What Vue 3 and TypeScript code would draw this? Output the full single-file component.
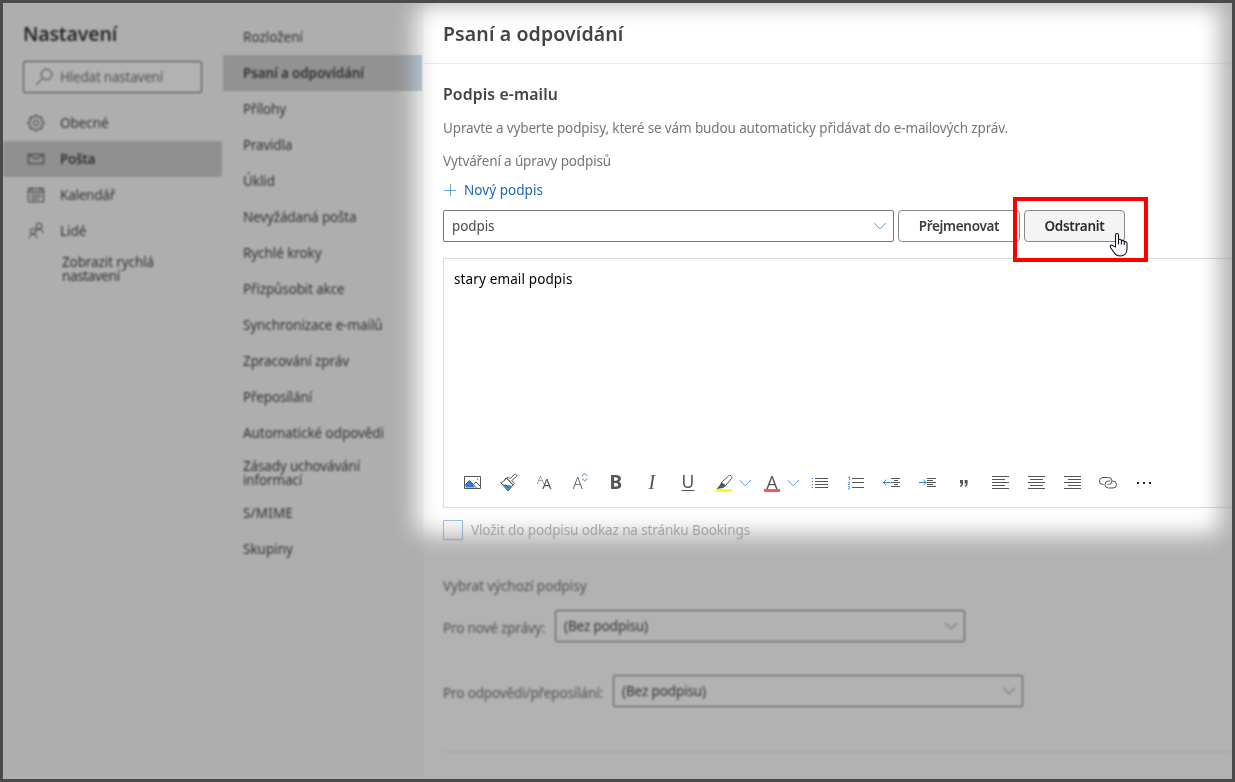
<script setup lang="ts">
import { nextTick } from 'vue'

interface Label { text: string; width: number }
interface MenuItem { lines: Label[]; active?: boolean }

// Tracks a label out (or in) so that it takes the given width.
const fit = (el: HTMLElement, width: number) => {
  const apply = () => {
    el.style.letterSpacing = '0px'
    const count = (el.textContent ?? '').trim().length
    el.style.letterSpacing = `${(width - el.getBoundingClientRect().width) / count}px`
  }
  nextTick(apply)
}
const vFit = { mounted: (el: HTMLElement, b: { value: number }) => fit(el, b.value) }

const sections = [
  { icon: 'gear', text: 'Obecné', width: 48.5 },
  { icon: 'mail', text: 'Pošta', width: 35, active: true },
  { icon: 'calendar', text: 'Kalendář', width: 55 },
  { icon: 'people', text: 'Lidé', width: 26.5 },
]

const one = (text: string, width: number, active = false): MenuItem => ({ lines: [{ text, width }], active })
const topics: MenuItem[] = [
  one('Rozložení', 60),
  one('Psaní a odpovídání', 121, true),
  one('Přílohy', 43),
  one('Pravidla', 49),
  one('Úklid', 32),
  one('Nevyžádaná pošta', 113.5),
  one('Rychlé kroky', 78.5),
  one('Přizpůsobit akce', 101.5),
  one('Synchronizace e-mailů', 139.5),
  one('Zpracování zpráv', 106),
  one('Přeposílání', 69),
  one('Automatické odpovědi', 141),
  { lines: [{ text: 'Zásady uchovávání', width: 117 }, { text: 'informací', width: 59 }] },
  one('S/MIME', 50),
  one('Skupiny', 50),
]

const gearTeeth = Array.from({ length: 8 }, (_, i) => i * 45)
const alignments = [
  { name: 'left', d: 'M10 6.5h17M10 9.5h13M10 12.5h17M10 15.5h13M10 18.5h17' },
  { name: 'center', d: 'M10 6.5h17M12 9.5h13M10 12.5h17M12 15.5h13M10 18.5h17' },
  { name: 'right', d: 'M10 6.5h17M14 9.5h13M10 12.5h17M14 15.5h13M10 18.5h17' },
]
</script>

<template>
  <div class="window">
    <nav class="sections">
      <h1><span v-fit="94">Nastavení</span></h1>
      <div class="search">
        <svg width="18" height="18" viewBox="0 0 18 18" class="line"><circle cx="11.5" cy="6.5" r="5.3" /><path d="M7.6 10.4 1 17" /></svg>
        <span v-fit="103">Hledat nastavení</span>
      </div>
      <div v-for="s in sections" :key="s.text" class="section" :class="{ active: s.active }">
        <svg width="18" height="18" viewBox="0 0 18 18" class="line">
          <template v-if="s.icon === 'gear'">
            <circle cx="9" cy="9" r="2.6" />
            <path v-for="a in gearTeeth" :key="a" :transform="`rotate(${a} 9 9)`" d="M6.7 3.4 7.6 3.1 7.7 1.3H10.3L10.4 3.1 11.3 3.4" />
          </template>
          <template v-else-if="s.icon === 'mail'">
            <path d="M1.3 4.3h15.4v9.4H1.3zM1.3 4.8 9 9l7.7-4.2" />
          </template>
          <template v-else-if="s.icon === 'calendar'">
            <path d="M1.3 2.5h15.4v13.3H1.3zM1.3 5.5h15.4M4.5 1v3M13.5 1v3" />
            <path d="M3.7 8h11M3.7 10.7h11M3.7 13.3h8M5.5 7v7.5M8.2 7v7.5M11 7v7.5M13.7 7v5" class="faint" />
          </template>
          <template v-else>
            <circle cx="12" cy="4" r="3" /><path d="M8.2 9.6C9 7.6 10.5 7 12 7c2.3 0 3.8 1.5 4 4" />
            <circle cx="6" cy="9.5" r="2.8" /><path d="M2 16.3c.2-2.6 1.8-4 4-4s3.800 1.400 4 4" />
          </template>
        </svg>
        <span v-fit="s.width">{{ s.text }}</span>
      </div>
      <div class="quick"><div><span v-fit="92">Zobrazit rychlá</span></div><div><span v-fit="58">nastavení</span></div></div>
    </nav>

    <nav class="topics">
      <div v-for="t in topics" :key="t.lines[0].text" class="topic" :class="{ active: t.active, tall: t.lines.length > 1 }">
        <div v-for="l in t.lines" :key="l.text"><span v-fit="l.width">{{ l.text }}</span></div>
      </div>
    </nav>

    <main>
      <header><h2><span v-fit="180.5">Psaní a odpovídání</span></h2></header>
      <div class="content">
        <h3><span v-fit="115">Podpis e-mailu</span></h3>
        <p class="hint"><span v-fit="565">Upravte a vyberte podpisy, které se vám budou automaticky přidávat do e-mailových zpráv.</span></p>
        <p class="caption"><span v-fit="168">Vytváření a úpravy podpisů</span></p>
        <div class="new">
          <svg width="14" height="14" viewBox="0 0 14 14"><path d="M1 7.5h12M7.5 1v12" /></svg>
          <span v-fit="79">Nový podpis</span>
        </div>
        <div class="manage">
          <div class="select wide"><span v-fit="42.5">podpis</span><svg class="chev blue" width="14" height="8" viewBox="0 0 14 8"><path d="M1.2 1 7 6.8 12.8 1" /></svg></div>
          <button class="rename"><span v-fit="80.5">Přejmenovat</span></button>
          <button class="remove"><span v-fit="60">Odstranit</span></button>
        </div>
        <div class="editor">
          <p><span v-fit="118.5">stary email podpis</span></p>
          <div class="toolbar">
            <svg width="36" height="24" viewBox="0 0 36 24">
              <path class="fill-blue" d="M11.5 17.5v-2.5l4-4.5 3.5 4 1.5 3z" />
              <path class="ink" d="M10.5 6.5h16v12h-16zM11 15l4.5-4.5 7 7.5M19.5 14.5l2.5-2.5 4.5 4.5M23 9.2h1.2" />
            </svg>
            <svg width="36" height="24" viewBox="0 0 36 24">
              <path class="fill-blue" d="M12.5 14.2 22 15.8 18.2 20.2z" />
              <path class="ink" d="M10.700 12.500 18 21l5.200-6-7-7c-1.300 2.500-3.100 4-5.500 4.500zM14.500 9.500l2-1.500 6.700 7 1.300-1.500-2.700-3 4.700-4.200c.9-1.300-.8-2.700-2-1.800l-4.500 4.200-1.500-1.700-2 1.300" />
            </svg>
            <svg width="36" height="24" viewBox="0 0 36 24"><text x="11" y="14" class="glyph" font-size="11.500">A</text><text x="16.200" y="19" class="glyph strong" font-size="14.500">A</text></svg>
            <svg width="36" height="24" viewBox="0 0 36 24"><text x="10.800" y="19" class="glyph" font-size="16.500">A</text><path class="blue-line strong-blue" d="m20 6 2.700-2.500L25.400 6M20 8.500l2.700 2.500 2.700-2.500" /></svg>
            <svg width="36" height="24" viewBox="0 0 36 24"><text x="11.500" y="19" class="bold">B</text></svg>
            <svg width="36" height="24" viewBox="0 0 36 24"><text x="14.500" y="19" class="italic">I</text></svg>
            <svg width="36" height="24" viewBox="0 0 36 24"><text x="11.500" y="18" class="under">U</text><path class="ink" d="M11.500 20.500h13" /></svg>
            <svg width="48" height="24" viewBox="0 0 48 24">
              <path class="ink" d="M15.500 12.500 22.800 5.700c1.700-1.100 4 .9 2.800 2.700L19.500 15.700z" /><path class="fill-ink" d="m15.300 12.300 4.400 3.700-2.700 2-6.500 1.100 3-3.500z" />
              <path fill="#ffff00" d="M10 19h16v3H10z" /><path class="blue-line" d="M33.500 10 39.200 15.700 45 10" />
            </svg>
            <svg width="48" height="24" viewBox="0 0 48 24">
              <text x="12.300" y="18.500" class="glyph strong" font-size="18">A</text>
              <path fill="#ee5e56" d="M10 19h16v3H10z" /><path class="blue-line" d="M33.500 10 39.200 15.700 45 10" />
            </svg>
            <svg width="36" height="24" viewBox="0 0 36 24"><path class="ink" d="M13 8.500H26M13 11.500H26M13 14.500H26M13 17.500H26" /><path class="blue-solid" d="M10 8.500h1M10 11.500h1M10 14.500h1M10 17.500h1" /></svg>
            <svg width="36" height="24" viewBox="0 0 36 24"><path class="ink" d="M14 8.500h12M14 12.500h12M14 17.500h12" /><path class="blue-line" d="M10 7.500l1.500-.8v3.500M10 12h1.500v1L10 14.500h2M10 16.500h1.500v2.300H10" /></svg>
            <svg width="36" height="24" viewBox="0 0 36 24"><path class="ink" d="M17 8.500h9M20 10.500h4M17 12.500h9M20 14.500h4M17 16.500h9" /><path class="blue-solid" d="M9.500 12.500h7M12 9.700 9.500 12.500l2.500 2.800" /></svg>
            <svg width="36" height="24" viewBox="0 0 36 24"><path class="ink" d="M17 8.500h9M17 10.500h6M17 12.500h9M17 14.500h6M17 16.500h9" /><path class="blue-solid" d="M9 12.500h7M13.500 9.700l2.500 2.800-2.500 2.800" /></svg>
            <svg width="36" height="24" viewBox="0 0 36 24"><path class="fill-ink" d="M14 10h3v3.500c0 2-1 3-3 3.300v-1.300c1-.3 1.500-.9 1.500-2H14zM18.600 10h3v3.500c0 2-1 3-3 3.300v-1.300c1-.3 1.500-.9 1.500-2h-1.500z" /></svg>
            <svg v-for="a in alignments" :key="a.name" width="36" height="24" viewBox="0 0 36 24"><path class="ink" :d="a.d" /></svg>
            <svg width="36" height="24" viewBox="0 0 36 24"><path class="ink" d="M13.500 14.500H13a3.500 3.500 0 0 1 0-7h5.500a3.500 3.500 0 0 1 0 7H17.500M22.500 11h.5a3.400 3.400 0 0 1 0 7h-4.500a3.500 3.500 0 0 1 0-7h1.500" /></svg>
            <svg width="36" height="24" viewBox="0 0 36 24"><path fill="#222" d="M11 12h2v2h-2zM17 12h2v2h-2zM23 12h2v2h-2z" /></svg>
          </div>
        </div>
        <div class="bookings"><i class="checkbox"></i><span v-fit="279">Vložit do podpisu odkaz na stránku Bookings</span></div>
        <p class="defaults"><span v-fit="143.5">Vybrat výchozí podpisy</span></p>
        <div class="choice first">
          <label><span v-fit="102">Pro nové zprávy:</span></label>
          <div class="select"><span v-fit="84">(Bez podpisu)</span><svg class="chev" width="14" height="8" viewBox="0 0 14 8"><path d="M1.2 1 7 6.8 12.8 1" /></svg></div>
        </div>
        <div class="choice">
          <label><span v-fit="160">Pro odpovědi/přeposílání:</span></label>
          <div class="select"><span v-fit="84">(Bez podpisu)</span><svg class="chev" width="14" height="8" viewBox="0 0 14 8"><path d="M1.2 1 7 6.8 12.8 1" /></svg></div>
        </div>
        <hr>
      </div>
    </main>

    <div class="dim"></div>
    <div class="spotlight"></div>
    <div class="marker"></div>
    <svg class="cursor" width="20" height="26" viewBox="0 0 20 26">
      <path d="M6.500 15V3.200c0-2.200 3-2.200 3 0v5.300c.2-1.700 2.700-1.500 2.900.2v.6c.3-1.400 2.600-1.300 2.900.4v.7c.4-1.200 2.700-1 2.700 1v5.400c0 4.500-2.800 7.200-6.700 7.200-3.300 0-5.200-1.300-6.600-4L1.500 15.500c-.9-2 1.300-3.200 2.700-1.600z" />
      <path d="M9.500 8v4.500M12.400 9v3.500M15.300 10v3" />
    </svg>
    <div class="frame"></div>
  </div>
</template>

<style>
body { background: #fff; }
</style>

<style scoped>
.window { position: relative; display: flex; box-sizing: border-box; width: 1235px; height: 782px; padding: 3px; overflow: hidden; background: #fff; color: #484848; font: 13.500px/18px "Noto Sans", "Open Sans", sans-serif; white-space: nowrap; }
h1, h2, h3, p { margin: 0; font-size: inherit; font-weight: inherit; }
span { display: inline-block; }
svg { flex: none; fill: none; overflow: visible; }
.sections { flex: none; box-sizing: border-box; width: 219px; background: #fafafa; }
h1 { height: 58px; padding-left: 20px; font-size: 19.500px; font-weight: 600; line-height: 62px; color: #383838; }
.search { display: flex; align-items: center; gap: 7px; box-sizing: border-box; width: 179px; height: 32px; margin: 0 0 12px 20px; padding-left: 11px; border: 1px solid #666; border-radius: 2px; color: #787878; background: #fff; }
.line { stroke: #4c4c4c; stroke-width: 1; }
.faint { opacity: .5; }
.section { display: flex; align-items: center; gap: 15px; height: 36px; padding-left: 24px; }
.section.active { background: #cfcfcf; font-weight: 600; border-radius: 2px; }
.quick { padding: 6px 0 0 59px; line-height: 14px; }
.quick div, .topic div { height: 14px; }
.topics { flex: none; box-sizing: border-box; width: 201px; padding-top: 16px; border-left: 1px solid #f6f6f6; border-right: 1px solid #f4f4f4; background: #fafafa; }
.topic { display: flex; flex-direction: column; justify-content: center; height: 36px; padding-left: 20px; line-height: 14px; }
.topic.tall { height: 44px; }
.topic.active { background: #bfd4ea; font-weight: 600; }
main { flex: 1; min-width: 0; }
header { box-sizing: border-box; height: 61px; border-bottom: 1px solid #eaeaea; }
h2 { padding-left: 20px; font-size: 19.500px; font-weight: 600; line-height: 61px; }
h2, h3 { color: #444; }
.content { padding-left: 20px; }
h3 { padding-top: 19px; height: 24px; font-size: 15.800px; font-weight: 600; line-height: 22px; }
.hint, .caption { color: #767676; line-height: 20px; }
.hint { margin-top: 11px; }
.caption { margin-top: 13px; }
.new { display: flex; align-items: center; gap: 7px; height: 20px; margin-top: 9px; color: #1a66bb; }
.new svg { stroke: #6ba3d8; }
.new span, .select span, button span, .search span, .section span, .bookings span { margin-top: -1px; }
.manage { display: flex; gap: 4px; margin-top: 10px; }
.select { display: flex; align-items: center; justify-content: space-between; box-sizing: border-box; width: 410px; height: 32px; padding: 0 6px 0 8px; border: 1px solid #777; border-radius: 2px; }
.select.wide { width: 451px; }
.chev { stroke: #777; }
.chev.blue { stroke: #6b96c0; }
button { display: flex; justify-content: center; align-items: center; box-sizing: border-box; height: 32px; padding: 0; border: 1px solid #888; border-radius: 4px; background: #fff; color: #3c3c3c; font: inherit; font-weight: 600; }
.rename { width: 122px; }
.remove { width: 101px; background: #f4f4f4; color: #2a2a2a; }
.editor { display: flex; flex-direction: column; justify-content: space-between; box-sizing: border-box; height: 250px; margin-top: 16px; border: 1px solid #dadada; border-right: 0; color: #000; }
.editor p { padding: 10px 0 0 10px; line-height: 20px; }
.toolbar { display: flex; height: 24px; margin: 0 0 13px 10px; }
.ink { stroke: #555; }
.fill-ink { fill: #555; }
.fill-blue { fill: #2b7cd3; }
.blue-line { stroke: #5c9ee0; }
.strong-blue { stroke: #3b8ae0; }
.blue-solid { stroke: #2b7cd3; }
.glyph { fill: #555; font-family: "Open Sans", sans-serif; font-weight: 300; }
.strong { font-weight: 400; }
.bold { fill: #555; font-size: 19px; font-weight: 700; }
.italic { fill: #555; font: italic 20px "Liberation Serif", serif; }
.under { fill: #555; font-size: 17.500px; }
.bookings { display: flex; align-items: center; gap: 8px; height: 20px; margin-top: 12px; color: #b4b4b4; }
.checkbox { box-sizing: border-box; width: 20px; height: 20px; border: 1px solid #9fc3ee; border-radius: 1px; }
.defaults { margin-top: 36px; color: #767676; line-height: 20px; }
.choice { display: flex; gap: 10px; height: 32px; margin-top: 33px; }
.choice.first { margin-top: 14px; }
.choice label { color: #767676; line-height: 36px; }
hr { height: 1px; margin: 44px 0 0; border: 0; background: #ededed; }
.dim { position: absolute; inset: 0; backdrop-filter: grayscale(1) blur(.8px); mask-image: linear-gradient(90deg, #000 400px, transparent 428px, transparent 1210px, #000 1232px), linear-gradient(transparent 525px, #000 550px); }
.spotlight { position: absolute; left: 416px; top: 5px; width: 804px; height: 529px; border-radius: 10px; box-shadow: 0 0 0 1400px #000; opacity: .3; filter: blur(11px); }
.marker { position: absolute; left: 1013px; top: 197px; box-sizing: border-box; width: 135px; height: 65px; border: 4px solid #f00; }
.cursor { position: absolute; left: 1109px; top: 232px; fill: #fff; stroke: #111122; stroke-width: 1.100; }
.frame { position: absolute; inset: 0; border: 3px solid #4a4a4a; }
</style>
